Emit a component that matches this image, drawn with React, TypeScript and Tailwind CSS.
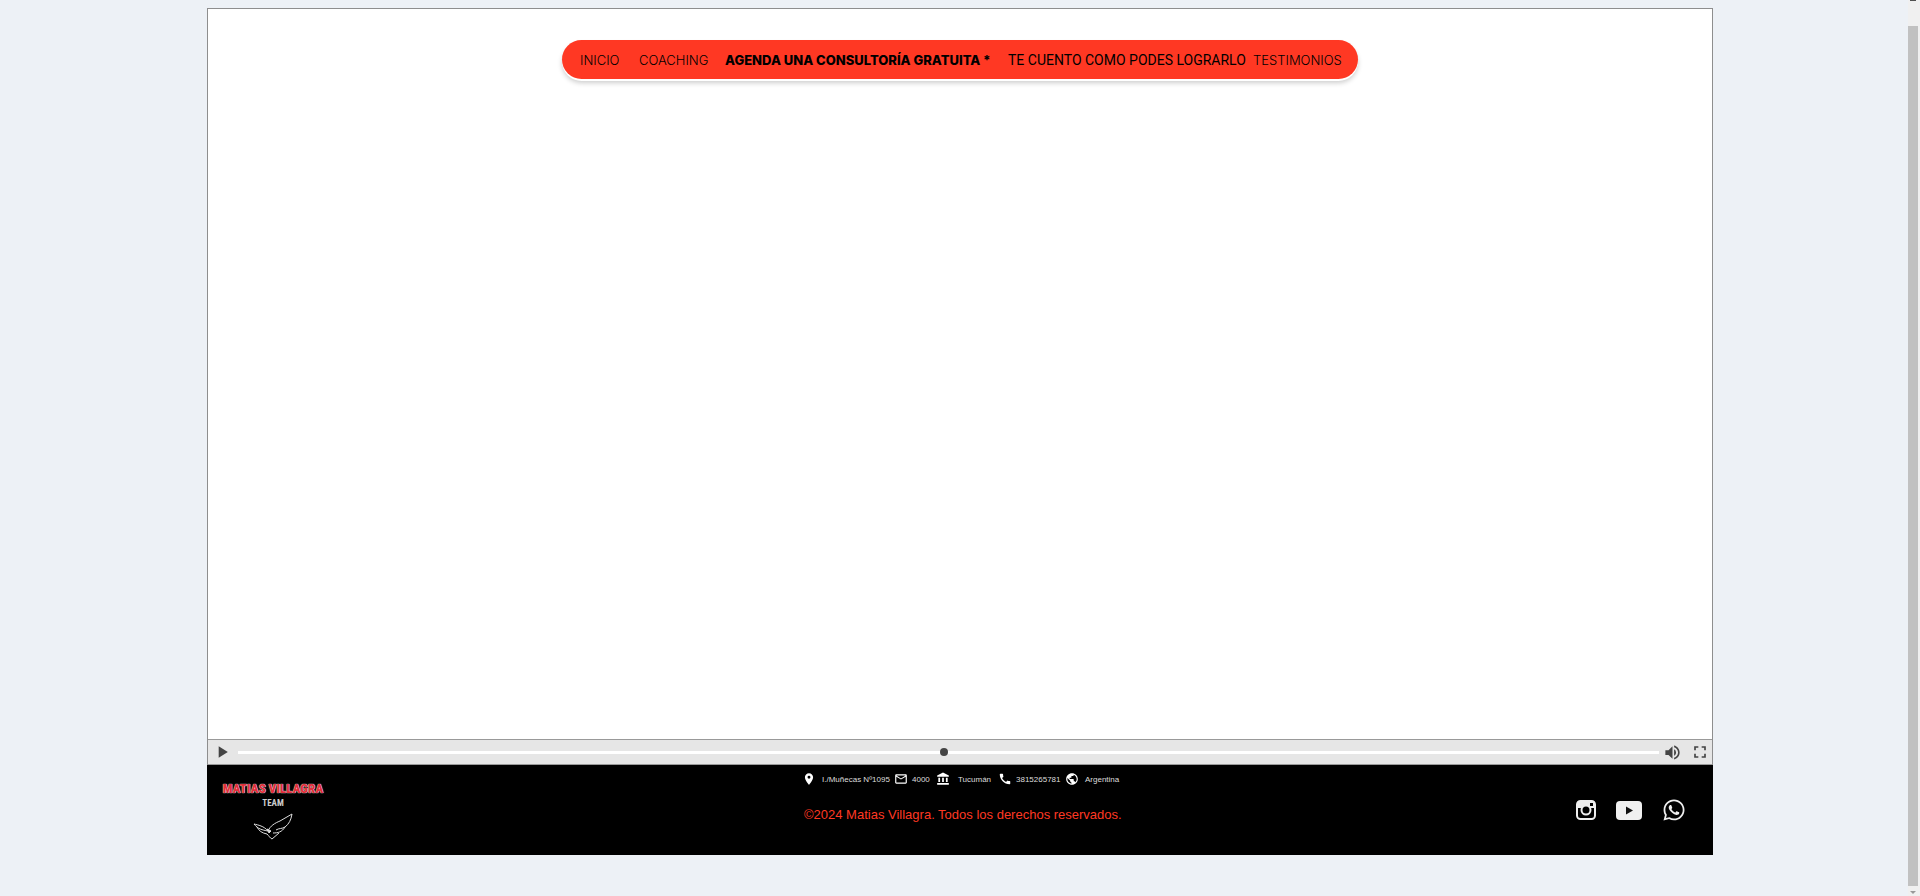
import React from "react";
import {
  MdAccountBalance,
  MdCall,
  MdFullscreen,
  MdLocationOn,
  MdMailOutline,
  MdPlayArrow,
  MdPublic,
  MdVolumeUp,
} from "react-icons/md";
import { FaWhatsapp } from "react-icons/fa";

const navLinks = [
  { label: "INICIO", style: "w-[59px] text-[13px] font-light font-['Inter',sans-serif]" },
  { label: "COACHING", style: "w-[86px] text-[13px] font-light font-['Inter',sans-serif]" },
  { label: "AGENDA UNA CONSULTORÍA GRATUITA *", style: "w-[283px] text-[13px] font-extrabold font-['Inter',sans-serif]" },
  { label: "TE CUENTO COMO PODES LOGRARLO", style: "w-[245px] text-sm font-['Roboto',sans-serif]" },
  { label: "TESTIMONIOS", style: "text-[13px] font-light font-['Inter',sans-serif]" },
];

const contacts = [
  { Icon: MdLocationOn, label: "I./Muñecas Nº1095", style: "w-[92px] gap-1.5" },
  { Icon: MdMailOutline, label: "4000", style: "w-[42px] gap-1" },
  { Icon: MdAccountBalance, label: "Tucumán", style: "w-[62px] gap-2" },
  { Icon: MdCall, label: "3815265781", style: "w-[67px] gap-1" },
  { Icon: MdPublic, label: "Argentina", style: "gap-1.5" },
];

function Wings() {
  return (
    <svg className="mt-1 h-[27px] w-[40px]" viewBox="0 0 40 27" fill="none" stroke="#ddd" strokeWidth="1" aria-hidden="true">
      <path d="M15 18C9 17 5 16 1 11C5 12 11 13 15 18C17 13 22 10 27 8L39 1C38 7 36 11 32 14C29 16 26 15 23 17M4 14C6 18 9 20 14 21M32 14C29 19 25 20 20 20M14 21C16 23 17 25 19 26L26 20" />
      <path d="M14 16L18 18L16 20Z" fill="#ddd" />
    </svg>
  );
}

function InstagramIcon() {
  return (
    <svg className="size-5" viewBox="0 0 20 20" fill="none" aria-hidden="true">
      <rect x="1" y="1" width="18" height="18" rx="3.5" stroke="#eee" strokeWidth="2" />
      <path d="M1 4a3 3 0 0 1 3-3h12a3 3 0 0 1 3 3v4H1Z" fill="#eee" />
      <rect x="14" y="3" width="3" height="3" fill="#000" />
      <circle cx="10" cy="10" r="4.5" fill="#000" stroke="#eee" strokeWidth="2" />
    </svg>
  );
}

function YoutubeIcon() {
  return (
    <svg className="h-[19px] w-[26px]" viewBox="0 0 26 19" aria-hidden="true">
      <rect width="26" height="19" rx="4" fill="#f0f0f0" />
      <path d="M10 5.5v8l7-4Z" fill="#111" />
    </svg>
  );
}

export default function App() {
  return (
    <div className="flex min-h-screen flex-col bg-[#edf1f6] px-[207px] pt-2 pb-[41px] font-['Liberation_Sans',sans-serif]">
      <div className="flex flex-1 flex-col border-x border-t border-[#8e8e8e] bg-white">
        <header className="flex justify-center pt-[31px]">
          <nav className="flex h-[39px] w-[796px] items-center rounded-full bg-[#ff3823] pl-[18px] shadow-[0_2px_0_#fff,0_4px_5px_rgba(0,0,0,0.2)]">
            {navLinks.map(({ label, style }) => (
              <a key={label} href="#" className={`block shrink-0 whitespace-nowrap leading-5 text-black ${style}`}>
                {label}
              </a>
            ))}
          </nav>
        </header>
        <main className="flex-1" />
        <div className="flex h-[26px] items-center border-y border-[#999] bg-[#e6e6e6] pr-0.5 pl-1 text-[#444]">
          <button type="button" aria-label="Reproducir" className="mr-1.5">
            <MdPlayArrow className="size-5" />
          </button>
          <input
            type="range"
            aria-label="Progreso"
            min="0"
            max="1000"
            defaultValue="497"
            className="h-3 min-w-0 flex-1 appearance-none bg-transparent [&::-webkit-slider-runnable-track]:h-[3px] [&::-webkit-slider-runnable-track]:bg-white [&::-webkit-slider-thumb]:-mt-[3px] [&::-webkit-slider-thumb]:size-2 [&::-webkit-slider-thumb]:appearance-none [&::-webkit-slider-thumb]:rounded-full [&::-webkit-slider-thumb]:bg-[#444]"
          />
          <button type="button" aria-label="Volumen" className="ml-1">
            <MdVolumeUp className="size-[19px]" />
          </button>
          <button type="button" aria-label="Pantalla completa" className="ml-2">
            <MdFullscreen className="size-5" />
          </button>
        </div>
      </div>
      <footer className="grid h-[90px] grid-cols-[1fr_auto_1fr] bg-black">
        <div className="ml-4 flex w-[100px] flex-col items-center pt-4">
          <p className="whitespace-nowrap font-['Roboto_Condensed','Roboto',sans-serif] text-[13px] leading-4 font-black text-[#e0303a] [text-shadow:0_0_1px_#fff,0_0_1px_#fff]">
            MATIAS VILLAGRA
          </p>
          <p className="font-['Roboto_Condensed','Roboto',sans-serif] text-[9px] leading-3 font-bold text-[#ccc]">TEAM</p>
          <Wings />
        </div>
        <div className="w-[316px] pt-1.5">
          <address className="flex h-4 items-center text-[8px] text-[#ddd] not-italic">
            {contacts.map(({ Icon, label, style }) => (
              <span key={label} className={`flex shrink-0 items-center whitespace-nowrap ${style}`}>
                <Icon className="size-[14px] shrink-0 text-white" />
                <span className="pt-0.5">{label}</span>
              </span>
            ))}
          </address>
          <p className="mt-5 pl-0.5 text-[13px] leading-4 whitespace-nowrap text-[#ff3823]">
            ©2024 Matias Villagra. Todos los derechos reservados.
          </p>
        </div>
        <div className="flex h-[90px] items-center justify-end gap-5 pr-[27px] text-[#eee]">
          <a href="#" aria-label="Instagram"><InstagramIcon /></a>
          <a href="#" aria-label="YouTube"><YoutubeIcon /></a>
          <a href="#" aria-label="WhatsApp"><FaWhatsapp className="size-6" /></a>
        </div>
      </footer>
      <div className="fixed inset-y-0 right-0 flex w-3 flex-col bg-[#f0f0f0]" aria-hidden="true">
        <div className="ml-0.5 h-px w-1.5 bg-[#505050]" />
        <div className="mt-[25px] mr-0.5 flex-1 bg-[#c1c1c1]" />
        <svg className="mt-[5px] mb-0.5 ml-0.5 h-[3px] w-1.5" viewBox="0 0 6 3">
          <path d="M0 0h6L3 3Z" fill="#999" />
        </svg>
      </div>
    </div>
  );
}
